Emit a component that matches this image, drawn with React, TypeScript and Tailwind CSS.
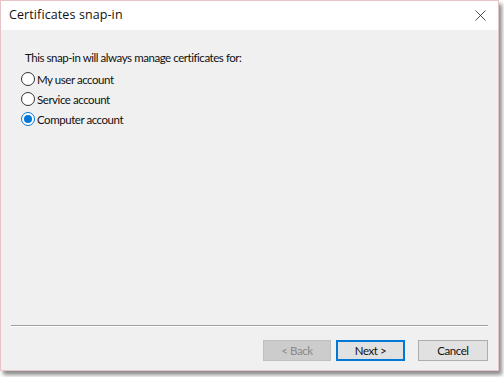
import { X } from 'lucide-react';

const options = [
  { label: 'My user account', checked: false },
  { label: 'Service account', checked: false },
  { label: 'Computer account', checked: true },
];

function Radio({ checked }: { checked: boolean }) {
  return (
    <span
      className={`w-[14px] h-[14px] rounded-full border bg-white flex items-center justify-center shrink-0 ${
        checked ? 'border-[#0078d7]' : 'border-[#333333]'
      }`}
    >
      {checked && <span className="w-[8px] h-[8px] rounded-full bg-[#0078d7]" />}
    </span>
  );
}

export default function App() {
  return (
    <div className="w-[504px] h-[377px] bg-white font-['Lato',sans-serif] text-[11.5px] tracking-[-0.45px] text-[#111]">
      <div className="w-[499px] h-[371px] flex flex-col border border-[#e6c4c8] shadow-[3px_4px_4px_rgba(0,0,0,0.45)]">
        <div className="h-[29px] bg-white flex items-center justify-between pl-[8px] pr-[8px]">
          <span className="font-['Open_Sans',sans-serif] text-[12.5px] tracking-[0.1px]">Certificates snap-in</span>
          <X size={19} strokeWidth={1} className="text-[#222]" />
        </div>
        <div className="flex-1 bg-[#f0f0f0] flex flex-col">
          <div className="flex-1 pl-[20px] pt-[19px]">
            <p className="pl-[4px] mb-[3px]">This snap-in will always manage certificates for:</p>
            <div className="flex flex-col">
              {options.map((o) => (
                <label key={o.label} className="flex items-center gap-[2px] h-[20px]">
                  <Radio checked={o.checked} />
                  <span>{o.label}</span>
                </label>
              ))}
            </div>
          </div>
          <div className="mx-[10px] border-t border-[#a0a0a0] border-b border-b-white" />
          <div className="flex justify-end items-center gap-[5px] pr-[10px] pt-[13px] pb-[9px]">
            <button className="w-[68px] h-[21px] bg-[#cccccc] border border-[#bfbfbf] text-[#8a8a8a]">
              &lt; Back
            </button>
            <button className="w-[69px] h-[21px] bg-[#e1e1e1] border-2 border-[#0078d7]">
              Next &gt;
            </button>
            <button className="w-[70px] h-[21px] bg-[#e1e1e1] border border-[#adadad] ml-[8px]">
              Cancel
            </button>
          </div>
        </div>
      </div>
    </div>
  );
}
